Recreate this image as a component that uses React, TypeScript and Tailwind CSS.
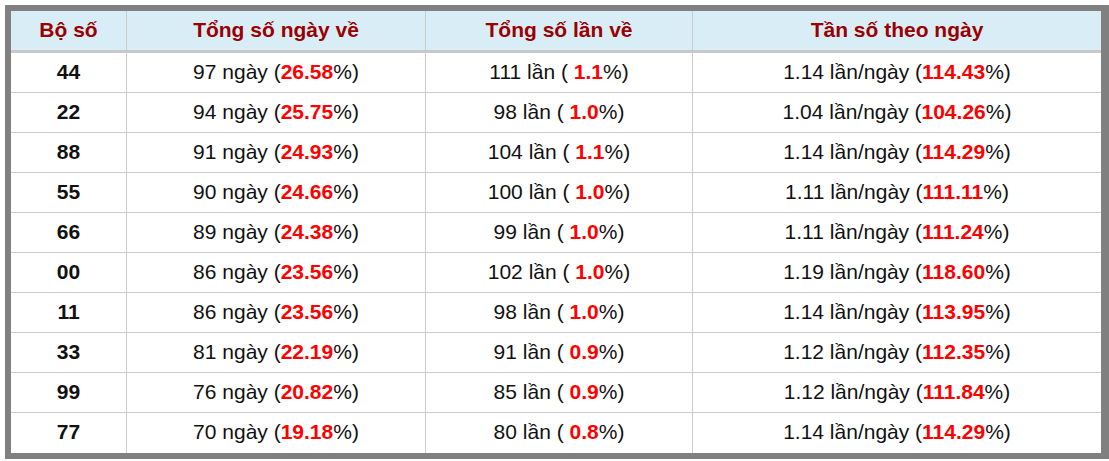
const rows = [
  ["44", "97", "26.58", "111", "1.1", "1.14", "114.43"],
  ["22", "94", "25.75", "98", "1.0", "1.04", "104.26"],
  ["88", "91", "24.93", "104", "1.1", "1.14", "114.29"],
  ["55", "90", "24.66", "100", "1.0", "1.11", "111.11"],
  ["66", "89", "24.38", "99", "1.0", "1.11", "111.24"],
  ["00", "86", "23.56", "102", "1.0", "1.19", "118.60"],
  ["11", "86", "23.56", "98", "1.0", "1.14", "113.95"],
  ["33", "81", "22.19", "91", "0.9", "1.12", "112.35"],
  ["99", "76", "20.82", "85", "0.9", "1.12", "111.84"],
  ["77", "70", "19.18", "80", "0.8", "1.14", "114.29"],
];

const cols = "grid grid-cols-[116px_299px_267px_408px]";
const cell = "flex items-center justify-center whitespace-pre pb-[2px] border-r border-[#cccccc] last:border-r-0";

export default function App() {
  return (
    <div className="bg-white pl-[5px] pt-[5px] w-[1109px] h-[461px] font-['Liberation_Sans',Arial,sans-serif] text-[21px] text-[#111]">
      <div className="w-[1104px] border-[6px] border-r-[8px] border-[#808080] bg-white">
        <div className={`${cols} h-[42px] bg-[#d9edf7] border-b-[3px] border-[#c8c8c8] font-bold text-[#990000]`}>
          <div className={cell}>Bộ số</div>
          <div className={cell}>Tổng số ngày về</div>
          <div className={cell}>Tổng số lần về</div>
          <div className={cell}>Tần số theo ngày</div>
        </div>
        {rows.map((r, i) => (
          <div key={r[0]} className={`${cols} h-[40px] ${i < rows.length - 1 ? "border-b border-[#cccccc]" : ""}`}>
            <div className={`${cell} font-bold`}>{r[0]}</div>
            <div className={cell}>
              {r[1]} ngày (<b className="text-[#ff0000]">{r[2]}</b>%)
            </div>
            <div className={cell}>
              {r[3]} lần ( <b className="text-[#ff0000]">{r[4]}</b>%)
            </div>
            <div className={cell}>
              {r[5]} lần/ngày (<b className="text-[#ff0000]">{r[6]}</b>%)
            </div>
          </div>
        ))}
      </div>
    </div>
  );
}
